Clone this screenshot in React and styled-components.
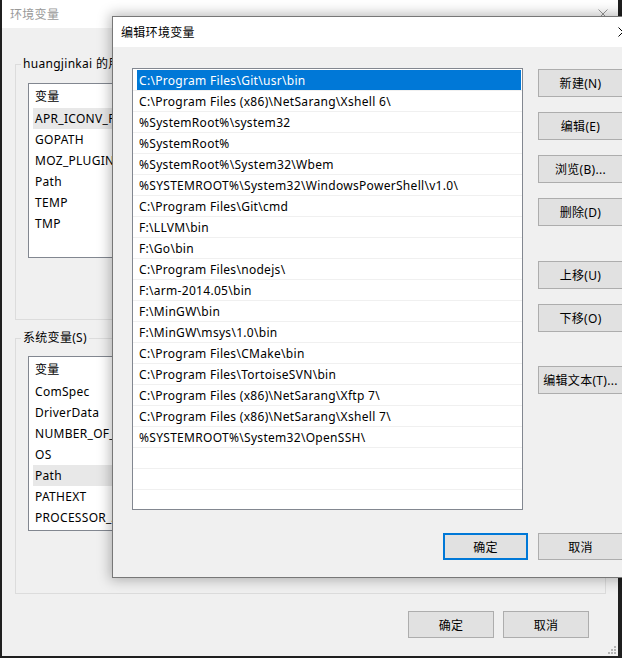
import styled, { createGlobalStyle } from "styled-components";

const GlobalStyle = createGlobalStyle`
  html, body {
    margin: 0;
    padding: 0;
    background: #1f1f1f;
  }
  body {
    width: 622px;
    height: 658px;
    overflow: hidden;
    font-family: "Noto Sans", "Noto Sans CJK SC", sans-serif;
    font-size: 12px;
    letter-spacing: 0.3px;
    color: #000;
  }
  * {
    box-sizing: border-box;
  }
`;

const Desktop = styled.div`
  position: relative;
  width: 622px;
  height: 658px;
  overflow: hidden;
  padding-left: 2px;
`;

const Window = styled.div`
  position: relative;
  width: 616px;
  height: 656px;
  background: #f0f0f0;
  display: flex;
  flex-direction: column;
`;

const TitleBar = styled.div`
  height: ${(p) => p.$h}px;
  flex: none;
  background: #fff;
  display: flex;
  align-items: center;
  justify-content: space-between;
  padding: 0 ${(p) => p.$pr}px 0 8px;
  color: ${(p) => (p.$inactive ? "#999" : "#000")};
  font-size: 12px;
`;

const WindowBody = styled.div`
  flex: 1;
  display: flex;
  flex-direction: column;
  padding: 28px 12px 0 13px;
`;

const GroupBox = styled.fieldset`
  margin: ${(p) => p.$mt}px 0 0 0;
  height: ${(p) => p.$h}px;
  border: 1px solid #dcdcdc;
  padding: ${(p) => p.$pt}px 12px 0 12px;
  min-width: 0;
`;

const Legend = styled.legend`
  padding: 0 2px;
  margin-left: -7px;
  line-height: 16px;
  font-size: 12px;
`;

const ListView = styled.div`
  height: 175px;
  background: #fff;
  border: 1px solid #828790;
  overflow: hidden;
`;

const ListHeader = styled.div`
  height: 24px;
  line-height: 25px;
  padding-left: 6px;
`;

const ListRow = styled.div`
  height: 21px;
  line-height: 21px;
  margin-left: 4px;
  padding-left: 2px;
  width: 200px;
  white-space: nowrap;
  overflow: hidden;
  background: ${(p) => (p.$hot ? "#e8e8e8" : "transparent")};
`;

const ButtonRow = styled.div`
  display: flex;
  justify-content: flex-end;
  gap: 9px;
  margin-top: 17px;
  padding-right: 17px;
`;

const Button = styled.button`
  width: ${(p) => p.$w || 85}px;
  height: ${(p) => p.$h || 28}px;
  margin-top: ${(p) => p.$mt || 0}px;
  padding: 0;
  background: #e1e1e1;
  border: ${(p) => (p.$default ? "2px solid #0078d7" : "1px solid #adadad")};
  font-family: inherit;
  font-size: 12px;
  letter-spacing: inherit;
  color: #000;
  flex: none;
`;

const Grip = styled.svg`
  position: absolute;
  right: 2px;
  bottom: 2px;
`;

const Dialog = styled.div`
  position: absolute;
  left: 112px;
  top: 16px;
  width: 534px;
  height: 562px;
  background: #f0f0f0;
  border: 1px solid #777;
  box-shadow: 0 0 12px 2px rgba(0, 0, 0, 0.28);
  display: flex;
  flex-direction: column;
`;

const DialogBody = styled.div`
  display: grid;
  grid-template-columns: 391px 85px;
  column-gap: 15px;
  row-gap: 23px;
  padding: 21px 0 0 19px;
  align-items: start;
`;

const PathList = styled.div`
  height: 442px;
  background: #fff;
  border: 1px solid #828790;
  padding-top: 1px;
  overflow: hidden;
`;

const PathRow = styled.div`
  height: 21px;
  border-bottom: 1px solid #f0f0f0;
`;

const PathItem = styled.div`
  height: 20px;
  line-height: 21px;
  margin: 0 1px 0 4px;
  padding-left: 2px;
  white-space: nowrap;
  overflow: hidden;
  background: ${(p) => (p.$selected ? "#0078d7" : "transparent")};
  color: ${(p) => (p.$selected ? "#fff" : "#000")};
`;

const SideButtons = styled.div`
  display: flex;
  flex-direction: column;
  gap: 15px;
  padding-top: 1px;
`;

const Footer = styled.div`
  grid-column: 1 / -1;
  display: flex;
  justify-content: flex-end;
  gap: 10px;
`;

const CloseIcon = ({ color }) => (
  <svg width="10" height="10" viewBox="0 0 10 10">
    <path d="M0.5 0.5 L9.5 9.5 M9.5 0.5 L0.5 9.5" stroke={color} strokeWidth="1" />
  </svg>
);

const userVars = ["APR_ICONV_PATH", "GOPATH", "MOZ_PLUGIN_PATH", "Path", "TEMP", "TMP"];
const systemVars = [
  "ComSpec",
  "DriverData",
  "NUMBER_OF_PROCESSORS",
  "OS",
  "Path",
  "PATHEXT",
  "PROCESSOR_ARCHITECTURE",
];

const paths = [
  "C:\\Program Files\\Git\\usr\\bin",
  "C:\\Program Files (x86)\\NetSarang\\Xshell 6\\",
  "%SystemRoot%\\system32",
  "%SystemRoot%",
  "%SystemRoot%\\System32\\Wbem",
  "%SYSTEMROOT%\\System32\\WindowsPowerShell\\v1.0\\",
  "C:\\Program Files\\Git\\cmd",
  "F:\\LLVM\\bin",
  "F:\\Go\\bin",
  "C:\\Program Files\\nodejs\\",
  "F:\\arm-2014.05\\bin",
  "F:\\MinGW\\bin",
  "F:\\MinGW\\msys\\1.0\\bin",
  "C:\\Program Files\\CMake\\bin",
  "C:\\Program Files\\TortoiseSVN\\bin",
  "C:\\Program Files (x86)\\NetSarang\\Xftp 7\\",
  "C:\\Program Files (x86)\\NetSarang\\Xshell 7\\",
  "%SYSTEMROOT%\\System32\\OpenSSH\\",
  "",
  "",
  "",
];

export default function App() {
  return (
    <>
      <GlobalStyle />
      <Desktop>
        <Window>
          <TitleBar $h={28} $pr={10} $inactive>
            <span>环境变量</span>
            <CloseIcon color="#999" />
          </TitleBar>
          <WindowBody>
            <GroupBox $mt={0} $h={264} $pt={11}>
              <Legend>huangjinkai 的用户变量(U)</Legend>
              <ListView>
                <ListHeader>变量</ListHeader>
                {userVars.map((v, i) => (
                  <ListRow key={v} $hot={i === 0}>
                    {v}
                  </ListRow>
                ))}
              </ListView>
            </GroupBox>
            <GroupBox $mt={10} $h={264} $pt={10}>
              <Legend>系统变量(S)</Legend>
              <ListView>
                <ListHeader>变量</ListHeader>
                {systemVars.map((v) => (
                  <ListRow key={v} $hot={v === "Path"}>
                    {v}
                  </ListRow>
                ))}
              </ListView>
            </GroupBox>
            <ButtonRow>
              <Button $w={86} $h={27}>确定</Button>
              <Button $w={86} $h={27}>取消</Button>
            </ButtonRow>
          </WindowBody>
          <Grip width="8" height="8" viewBox="0 0 8 8">
            <g fill="#b4b4b4">
              <rect x="6" y="0" width="2" height="2" />
              <rect x="3" y="3" width="2" height="2" />
              <rect x="6" y="3" width="2" height="2" />
              <rect x="0" y="6" width="2" height="2" />
              <rect x="3" y="6" width="2" height="2" />
              <rect x="6" y="6" width="2" height="2" />
            </g>
          </Grip>
        </Window>

        <Dialog>
          <TitleBar $h={30} $pr={17}>
            <span>编辑环境变量</span>
            <CloseIcon color="#000" />
          </TitleBar>
          <DialogBody>
            <PathList>
              {paths.map((p, i) => (
                <PathRow key={i}>
                  <PathItem $selected={i === 0}>{p}</PathItem>
                </PathRow>
              ))}
            </PathList>
            <SideButtons>
              <Button>新建(N)</Button>
              <Button>编辑(E)</Button>
              <Button>浏览(B)...</Button>
              <Button>删除(D)</Button>
              <Button $mt={20}>上移(U)</Button>
              <Button>下移(O)</Button>
              <Button $mt={19}>编辑文本(T)...</Button>
            </SideButtons>
            <Footer>
              <Button $h={27} $default>确定</Button>
              <Button $h={27}>取消</Button>
            </Footer>
          </DialogBody>
        </Dialog>
      </Desktop>
    </>
  );
}
